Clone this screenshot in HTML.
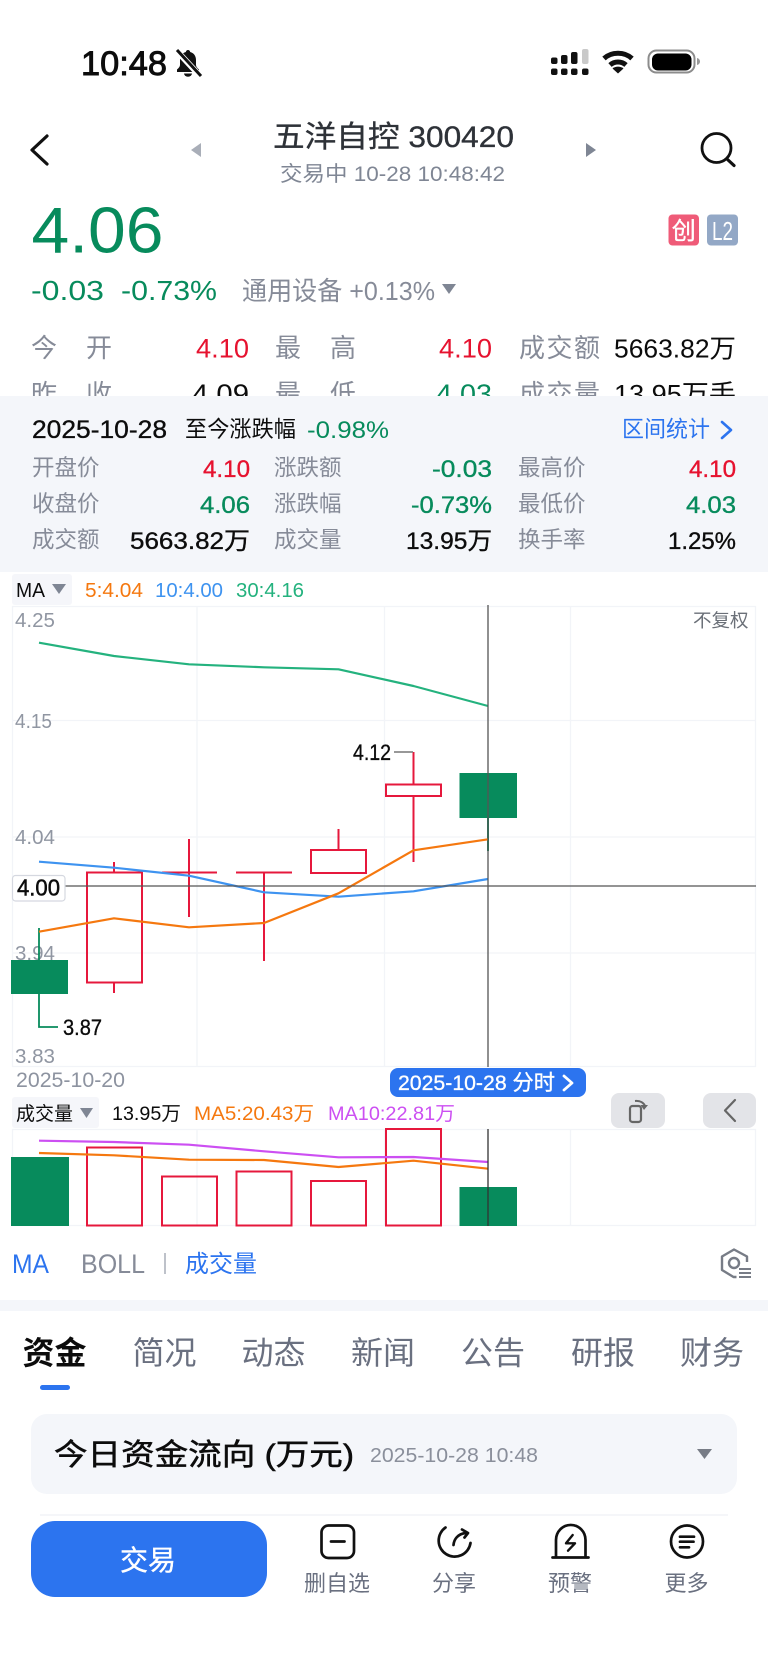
<!DOCTYPE html>
<html lang="zh">
<head>
<meta charset="utf-8">
<title>五洋自控 300420</title>
<style>
html,body{margin:0;padding:0;background:#fff;width:768px;height:1670px;overflow:hidden}
svg{display:block}
text{font-family:"Liberation Sans","Noto Sans CJK SC",sans-serif;white-space:pre}
.g{fill:#868b98;color:#868b98}.gr{fill:#078b5c;color:#078b5c}.r{fill:#e6122f;color:#e6122f}.k{fill:#0c0c0c;color:#0c0c0c}.b{fill:#2c74ef;color:#2c74ef}.w{fill:#fff;color:#fff}.t{fill:#2e3238;color:#2e3238}
.m{stroke:currentColor;stroke-width:.35}
</style>
</head>
<body>
<svg width="768" height="1670" viewBox="0 0 768 1670" xmlns="http://www.w3.org/2000/svg">
<rect width="768" height="1670" fill="#fff"/>

<!-- status bar -->
<text x="81" y="75" font-size="34" class="k" style="stroke:#0c0c0c;stroke-width:.9" textLength="86" lengthAdjust="spacingAndGlyphs">10:48</text>
<path d="M188 50c-1.300 0-2 .9-2.200 2-3.700 1-5.800 4-5.800 8v5c0 1.500-1.200 3-3 4.500V72h22v-2.500c-1.800-1.500-3-3-3-4.500v-5c0-4-2.100-7-5.800-8-.2-1.100-.9-2-2.200-2z" fill="#111"/>
<path d="M184 73.500a4 3.200 0 0 0 8 0z" fill="#111"/>
<path d="M176 50l25 27" stroke="#fff" stroke-width="6"/>
<path d="M177 50l24 26" stroke="#111" stroke-width="3"/>
<g fill="#111">
<rect x="551" y="57.500" width="6.500" height="6.500" rx="2"/><rect x="561" y="55" width="6.500" height="9" rx="2"/><rect x="571" y="52" width="6.500" height="12" rx="2"/>
<rect x="582" y="49" width="6.500" height="15" rx="2" fill="#c9c9c9"/>
<rect x="551" y="68.500" width="6.500" height="6.500" rx="2"/><rect x="561" y="68.500" width="6.500" height="6.500" rx="2"/><rect x="571" y="68.500" width="6.500" height="6.500" rx="2"/><rect x="582" y="68.500" width="6.500" height="6.500" rx="2"/>
</g>
<g fill="none" stroke="#111" stroke-width="5">
<path d="M604 58.500c7.500-7 20.500-7 28 0"/>
<path d="M610 65c4.500-4 11.500-4 16 0"/>
</g>
<path d="M612.500 68.500c3-2.500 8-2.500 11 0l-5.500 5z" fill="#111"/>
<rect x="648.500" y="50.500" width="46" height="22" rx="8" fill="none" stroke="#8c8c8c" stroke-width="2"/>
<rect x="652" y="53.500" width="39.500" height="17" rx="6" fill="#000"/>
<path d="M697 58c2 .5 3 2 3 3.500s-1 3-3 3.500z" fill="#999"/>

<!-- nav -->
<path d="M47 136L32 150l15 14" fill="none" stroke="#111" stroke-width="3.200" stroke-linecap="round" stroke-linejoin="round"/>
<path d="M201 143v14l-10-7z" fill="#a9aeb8"/>
<text x="273" y="147" font-size="30" class="t m" textLength="241" lengthAdjust="spacingAndGlyphs">五洋自控 300420</text>
<text x="280" y="181" font-size="21" fill="#7f8694" textLength="225" lengthAdjust="spacingAndGlyphs">交易中 10-28 10:48:42</text>
<path d="M586 143v14l10-7z" fill="#7f8694"/>
<circle cx="716.500" cy="148" r="14.500" fill="none" stroke="#111" stroke-width="2.800"/>
<path d="M727 159l7 6.500" stroke="#111" stroke-width="3.200" stroke-linecap="round"/>

<!-- quote -->
<text x="31.500" y="252.500" font-size="65" class="gr" textLength="132" lengthAdjust="spacingAndGlyphs">4.06</text>
<rect x="668.500" y="214.500" width="30.500" height="31" rx="4" fill="#ef5b78"/>
<text x="683.700" y="239" font-size="24" class="w m" text-anchor="middle">创</text>
<rect x="707" y="214.500" width="31" height="31" rx="4" fill="#93a8c6"/>
<text x="722.500" y="240" font-size="26" class="w" text-anchor="middle" textLength="21" lengthAdjust="spacingAndGlyphs">L2</text>
<text x="31" y="300" font-size="28" class="gr" textLength="73" lengthAdjust="spacingAndGlyphs">-0.03</text>
<text x="121" y="300" font-size="28" class="gr" textLength="96" lengthAdjust="spacingAndGlyphs">-0.73%</text>
<text x="242" y="300" font-size="26" class="g" textLength="193" lengthAdjust="spacingAndGlyphs">通用设备 +0.13%</text>
<path d="M442 284h14l-7 10z" fill="#7f8694"/>

<!-- stats -->
<g font-size="26">
<text x="31" y="357" class="g">今</text><text x="86" y="357" class="g">开</text>
<text x="249" y="357.500" font-size="27" text-anchor="end" class="r" textLength="53" lengthAdjust="spacingAndGlyphs">4.10</text>
<text x="275" y="357" class="g">最</text><text x="330" y="357" class="g">高</text>
<text x="492" y="357.500" font-size="27" text-anchor="end" class="r" textLength="53" lengthAdjust="spacingAndGlyphs">4.10</text>
<text x="519" y="357" class="g" textLength="81">成交额</text>
<text x="736" y="357.500" font-size="25.500" text-anchor="end" class="k" textLength="122" lengthAdjust="spacingAndGlyphs">5663.82万</text>
<text x="31" y="403" class="g">昨</text><text x="86" y="403" class="g">收</text>
<text x="249" y="403" font-size="27" text-anchor="end" class="k" textLength="57" lengthAdjust="spacingAndGlyphs">4.09</text>
<text x="275" y="403" class="g">最</text><text x="330" y="403" class="g">低</text>
<text x="492" y="403" font-size="27" text-anchor="end" class="gr" textLength="56" lengthAdjust="spacingAndGlyphs">4.03</text>
<text x="519" y="403" class="g" textLength="81">成交量</text>
<text x="736" y="403" font-size="25.500" text-anchor="end" class="k" textLength="122" lengthAdjust="spacingAndGlyphs">13.95万手</text>
</g>

<!-- range panel -->
<rect x="0" y="396" width="768" height="176" fill="#f4f6fa"/>
<text x="32" y="438" font-size="25" class="k m" textLength="135" lengthAdjust="spacingAndGlyphs">2025-10-28</text>
<text x="185" y="437" font-size="22.500" class="k" textLength="111" lengthAdjust="spacingAndGlyphs">至今涨跌幅</text>
<text x="307" y="438" font-size="24" class="gr" textLength="82" lengthAdjust="spacingAndGlyphs">-0.98%</text>
<text x="622" y="437" font-size="22.500" class="b" textLength="88" lengthAdjust="spacingAndGlyphs">区间统计</text>
<path d="M722 422l9 8-9 8" fill="none" stroke="#2c74ef" stroke-width="2.600" stroke-linecap="round" stroke-linejoin="round"/>
<g font-size="22.500" class="g">
<text x="32" y="475.500">开盘价</text><text x="274" y="475.500">涨跌额</text><text x="518" y="475.500">最高价</text>
<text x="32" y="511.500">收盘价</text><text x="274" y="511.500">涨跌幅</text><text x="518" y="511.500">最低价</text>
<text x="32" y="547.500">成交额</text><text x="274" y="547.500">成交量</text><text x="518" y="547.500">换手率</text>
</g>
<g font-size="24" text-anchor="end">
<text x="250" y="477" class="r m" textLength="47" lengthAdjust="spacingAndGlyphs">4.10</text>
<text x="492" y="477" class="gr m" textLength="60" lengthAdjust="spacingAndGlyphs">-0.03</text>
<text x="736" y="477" class="r m" textLength="47" lengthAdjust="spacingAndGlyphs">4.10</text>
<text x="250" y="513" class="gr m" textLength="50" lengthAdjust="spacingAndGlyphs">4.06</text>
<text x="492" y="513" class="gr m" textLength="81" lengthAdjust="spacingAndGlyphs">-0.73%</text>
<text x="736" y="513" class="gr m" textLength="50" lengthAdjust="spacingAndGlyphs">4.03</text>
<text x="250" y="549" class="k m" textLength="120" lengthAdjust="spacingAndGlyphs">5663.82万</text>
<text x="492" y="549" class="k m" textLength="86" lengthAdjust="spacingAndGlyphs">13.95万</text>
<text x="736" y="549" class="k m" textLength="68" lengthAdjust="spacingAndGlyphs">1.25%</text>
</g>

<!-- MA legend -->
<rect x="12" y="574" width="60" height="31" rx="3" fill="#f5f6fa"/>
<text x="16" y="597" font-size="20" class="k" textLength="29" lengthAdjust="spacingAndGlyphs">MA</text>
<path d="M52 584h14l-7 10z" fill="#7f8694"/>
<text x="85" y="597" font-size="20" fill="#f5780f" textLength="58" lengthAdjust="spacingAndGlyphs">5:4.04</text>
<text x="155" y="597" font-size="20" fill="#3e93f0" textLength="68" lengthAdjust="spacingAndGlyphs">10:4.00</text>
<text x="236" y="597" font-size="20" fill="#24b27e" textLength="68" lengthAdjust="spacingAndGlyphs">30:4.16</text>

<!-- chart grid -->
<g fill="none" stroke="#f2f4f8" stroke-width="1.300">
<rect x="12.500" y="606.500" width="743" height="460"/>
<path d="M197 606v461M384.500 606v461M570.500 606v461M12 720.500h744M12 837h744M12 953h744"/>
<rect x="12.500" y="1129.500" width="743" height="96"/>
<path d="M197 1129v97M384.500 1129v97M570.500 1129v97"/>
</g>
<g font-size="20" fill="#9096a2">
<text x="15" y="627" textLength="40" lengthAdjust="spacingAndGlyphs">4.25</text>
<text x="15" y="728" textLength="37" lengthAdjust="spacingAndGlyphs">4.15</text>
<text x="15" y="844" textLength="40" lengthAdjust="spacingAndGlyphs">4.04</text>
<text x="15" y="960" textLength="40" lengthAdjust="spacingAndGlyphs">3.94</text>
<text x="15" y="1063" textLength="40" lengthAdjust="spacingAndGlyphs">3.83</text>
</g>
<text x="693" y="627" font-size="18.500" fill="#6b7078">不复权</text>

<!-- candles -->
<g fill="none" stroke="#e6183c" stroke-width="2">
<rect x="87" y="872.500" width="55" height="110"/>
<path d="M114 862v10M114 983v10"/>
<path d="M162 872.500h55M189 839v78"/>
<path d="M236 872.500h56M264 872v89"/>
<rect x="311" y="850" width="55" height="23"/>
<path d="M338.500 829v21"/>
<rect x="386" y="784.500" width="55" height="11.500"/>
<path d="M413.500 752v32M413.500 796v66"/>
</g>
<path d="M39 928v99h19" fill="none" stroke="#078b5c" stroke-width="1.800"/>
<rect x="11" y="960" width="57" height="34" fill="#078b5c"/>
<path d="M488 818v33" stroke="#078b5c" stroke-width="2"/>
<rect x="459.500" y="773" width="57.500" height="45" fill="#078b5c"/>
<path d="M394 752h19" stroke="#777" stroke-width="1.500"/>
<text x="353" y="760" font-size="22" class="k m" textLength="38" lengthAdjust="spacingAndGlyphs">4.12</text>
<text x="63" y="1035" font-size="22" class="k m" textLength="39" lengthAdjust="spacingAndGlyphs">3.87</text>

<!-- MA lines -->
<g fill="none" stroke-width="2.200" stroke-linejoin="round">
<polyline stroke="#24b27e" points="39,642.700 114,656 189,664.300 264,667.300 338.500,669.300 413.500,686 488,706"/>
<polyline stroke="#3e93f0" points="39,861.700 114,867.700 189,875.700 264,892.300 338.500,896.700 413.500,891.300 488,879"/>
<polyline stroke="#f5780f" points="39,931.700 114,918.300 189,927.300 264,923 338.500,893.300 413.500,850.300 488,839.300"/>
</g>

<!-- crosshair -->
<path d="M488 605v462" stroke="#555" stroke-width="1.300"/>
<path d="M65 886h691" stroke="#555" stroke-width="1.300"/>
<rect x="12.500" y="875.500" width="52.500" height="25.500" rx="3" fill="#fff" stroke="#d5d8e0" stroke-width="1.200"/>
<text x="17" y="895.500" font-size="23" class="k m" style="stroke-width:.5" textLength="43" lengthAdjust="spacingAndGlyphs">4.00</text>

<!-- date axis -->
<text x="16" y="1087" font-size="21" fill="#8d93a0" textLength="109" lengthAdjust="spacingAndGlyphs">2025-10-20</text>
<rect x="390" y="1068" width="196" height="29" rx="8" fill="#2c74ef"/>
<text x="398" y="1090" font-size="21.500" class="w m" textLength="157" lengthAdjust="spacingAndGlyphs">2025-10-28 分时</text>
<path d="M564 1076l8 7-8 7" fill="none" stroke="#fff" stroke-width="2.800" stroke-linecap="round" stroke-linejoin="round"/>

<!-- volume legend -->
<rect x="12" y="1097" width="87" height="31" rx="3" fill="#f5f6fa"/>
<text x="16" y="1120" font-size="19" class="k">成交量</text>
<path d="M80 1108h13l-6.500 10z" fill="#7f8694"/>
<text x="112" y="1120" font-size="19.500" class="k" textLength="69" lengthAdjust="spacingAndGlyphs">13.95万</text>
<text x="194" y="1120" font-size="19.500" fill="#f5780f" textLength="120" lengthAdjust="spacingAndGlyphs">MA5:20.43万</text>
<text x="328" y="1120" font-size="19.500" fill="#cc4ff2" textLength="127" lengthAdjust="spacingAndGlyphs">MA10:22.81万</text>
<rect x="611" y="1093" width="54" height="35" rx="8" fill="#e3e4e8"/>
<rect x="703" y="1093" width="53" height="35" rx="8" fill="#e3e4e8"/>
<rect x="630" y="1106" width="11" height="16" rx="2.500" fill="none" stroke="#666" stroke-width="2.200"/>
<path d="M635 1101c5-.5 9 1.500 10.500 6" fill="none" stroke="#666" stroke-width="2"/>
<path d="M644 1110l-3.500-5h7.500z" fill="#666"/>
<path d="M735 1100l-10 10.500 10 10.500" fill="none" stroke="#666" stroke-width="2.200" stroke-linecap="round" stroke-linejoin="round"/>

<!-- volume bars -->
<rect x="11" y="1157" width="58" height="69" fill="#078b5c"/>
<rect x="459.500" y="1187" width="57.500" height="39" fill="#078b5c"/>
<g fill="none" stroke="#e6183c" stroke-width="2">
<rect x="87" y="1147.500" width="55" height="78"/>
<rect x="162" y="1176.500" width="55" height="49"/>
<rect x="236.500" y="1171.500" width="55" height="54"/>
<rect x="311" y="1181" width="55" height="44.500"/>
<rect x="386" y="1129" width="55" height="96.500"/>
</g>
<g fill="none" stroke-width="2.200" stroke-linejoin="round">
<polyline stroke="#cc4ff2" points="39,1140.700 114,1142 189,1144.700 264,1151.300 338.500,1157.300 413.500,1157 488,1162"/>
<polyline stroke="#f5780f" points="39,1153 114,1155.300 189,1159.700 264,1160 338.500,1167 413.500,1160.700 488,1168.700"/>
</g>
<path d="M488 1129v97" stroke="#333" stroke-width="1.300"/>

<!-- indicator tabs -->
<text x="12" y="1273" font-size="27" class="b" textLength="37" lengthAdjust="spacingAndGlyphs">MA</text>
<text x="81" y="1273" font-size="27" class="g" textLength="64" lengthAdjust="spacingAndGlyphs">BOLL</text>
<path d="M165 1253v21" stroke="#a9aeb8" stroke-width="1.500"/>
<text x="185" y="1272" font-size="24" class="b">成交量</text>
<path d="M747 1262v-5.500L734 1249.500l-12 7v13.500l11.500 7h3" fill="none" stroke="#777c86" stroke-width="2.400" stroke-linejoin="round"/>
<circle cx="734" cy="1263" r="5" fill="none" stroke="#777c86" stroke-width="2.400"/>
<path d="M739 1269h12M739 1273h12M739 1277h12" stroke="#777c86" stroke-width="2"/>

<!-- section gap -->
<rect x="0" y="1300" width="768" height="11" fill="#f4f6fa"/>

<!-- tabs -->
<g font-size="32" fill="#6a7080">
<text x="22.500" y="1364" class="k" font-weight="700">资金</text>
<text x="132.500" y="1364">简况</text>
<text x="241.500" y="1364">动态</text>
<text x="351" y="1364">新闻</text>
<text x="461" y="1364">公告</text>
<text x="571" y="1364">研报</text>
<text x="680" y="1364">财务</text>
</g>
<rect x="40" y="1385" width="30" height="5" rx="2.500" fill="#2c74ef"/>

<!-- fund panel -->
<rect x="31" y="1414" width="706" height="80" rx="16" fill="#f4f6fa"/>
<text x="54" y="1465" font-size="30" class="k m" style="stroke-width:.5" textLength="300" lengthAdjust="spacingAndGlyphs">今日资金流向 (万元)</text>
<text x="370" y="1462" font-size="20" fill="#8a8f9b" textLength="168" lengthAdjust="spacingAndGlyphs">2025-10-28 10:48</text>
<path d="M697 1449h15l-7.500 10z" fill="#777c86"/>
<path d="M40 1515h688" stroke="#f2f3f7" stroke-width="1.500"/>

<!-- bottom bar -->
<rect x="31" y="1521" width="236" height="76" rx="24" fill="#2c74ef"/>
<text x="120" y="1570" font-size="28" class="w m">交易</text>
<g fill="none" stroke="#111" stroke-width="2.700" stroke-linecap="round" stroke-linejoin="round">
<rect x="321.500" y="1525.500" width="32.500" height="32.500" rx="7"/>
<path d="M331 1541.500h13.500"/>
<path d="M445.500 1527.500a16 16 0 1 0 25 15.500"/>
<path d="M453.500 1545c.5-6 4.500-11 12-12"/>
<path d="M462 1529.500l6 3.500-3.500 4.500"/>
<path d="M556 1557v-17a14.700 15 0 0 1 29.500 0v17"/>
<path d="M552.500 1557.500h36"/>
<path d="M572.700 1535l-6.700 8.300h9l-7 7.400" stroke-width="2.400"/>
<circle cx="687" cy="1541.500" r="16"/>
<path d="M680 1536.700h14M680 1541.700h13.500M680 1547.300h9"/>
</g>
<g font-size="22" fill="#6a7080" text-anchor="middle">
<text x="337" y="1591">删自选</text>
<text x="454" y="1591">分享</text>
<text x="570" y="1591">预警</text>
<text x="686.500" y="1591">更多</text>
</g>
</svg>
</body>
</html>
